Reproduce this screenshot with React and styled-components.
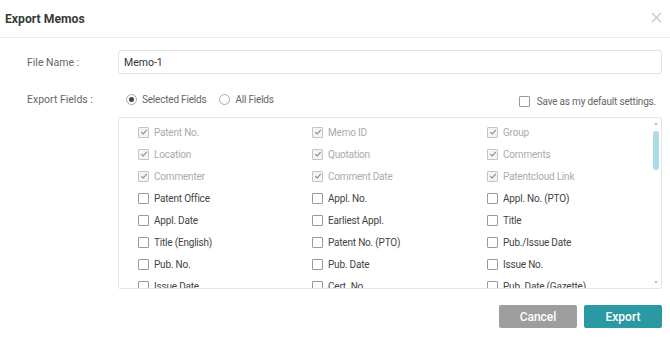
import React, { useState } from "react";
import styled, { createGlobalStyle } from "styled-components";

const GlobalStyle = createGlobalStyle`
  body {
    margin: 0;
    background: #fff;
    font-family: Roboto, "Liberation Sans", sans-serif;
    color: #555;
  }
`;

const fields = [
  ["Patent No.", true],
  ["Memo ID", true],
  ["Group", true],
  ["Location", true],
  ["Quotation", true],
  ["Comments", true],
  ["Commenter", true],
  ["Comment Date", true],
  ["Patentcloud Link", true],
  ["Patent Office", false],
  ["Appl. No.", false],
  ["Appl. No. (PTO)", false],
  ["Appl. Date", false],
  ["Earliest Appl.", false],
  ["Title", false],
  ["Title (English)", false],
  ["Patent No. (PTO)", false],
  ["Pub./Issue Date", false],
  ["Pub. No.", false],
  ["Pub. Date", false],
  ["Issue No.", false],
  ["Issue Date", false],
  ["Cert. No.", false],
  ["Pub. Date (Gazette)", false],
];

function Check({ checked }) {
  return (
    <Box checked={checked}>
      {checked && (
        <svg width="8" height="8" viewBox="0 0 8 8">
          <path d="M1.3 4.2 L3.2 6 L6.8 1.8" fill="none" stroke="#888" strokeWidth="1.1" />
        </svg>
      )}
    </Box>
  );
}

function App() {
  const [name, setName] = useState("Memo-1");
  const [mode, setMode] = useState("selected");

  return (
    <Modal>
      <GlobalStyle />
      <Header>
        <Title>Export Memos</Title>
        <Close aria-label="close">
          <svg width="11" height="11" viewBox="0 0 11 11">
            <path d="M1 1 L10 10 M10 1 L1 10" stroke="#c8c8c8" strokeWidth="1.4" />
          </svg>
        </Close>
      </Header>

      <Body>
        <FormRow>
          <Label>File Name :</Label>
          <Input value={name} onChange={(e) => setName(e.target.value)} />
        </FormRow>

        <FormRow top>
          <Label>Export Fields :</Label>
          <OptionsBar>
            <RadioGroup>
              <RadioItem onClick={() => setMode("selected")}>
                <Radio on={mode === "selected"} />
                Selected Fields
              </RadioItem>
              <RadioItem onClick={() => setMode("all")}>
                <Radio on={mode === "all"} />
                All Fields
              </RadioItem>
            </RadioGroup>
            <SaveDefault>
              <Check checked={false} />
              Save as my default settings.
            </SaveDefault>
          </OptionsBar>
        </FormRow>

        <FieldRow>
          <ListBox>
            <FieldGrid>
              {fields.map(([label, fixed]) => (
                <Field key={label} disabled={fixed}>
                  <Check checked={fixed} />
                  {label}
                </Field>
              ))}
            </FieldGrid>
            <ScrollTrack>
              <Arrow up />
              <Thumb />
              <Arrow />
            </ScrollTrack>
          </ListBox>
        </FieldRow>

        <Footer>
          <Button kind="cancel">Cancel</Button>
          <Button kind="primary">Export</Button>
        </Footer>
      </Body>
    </Modal>
  );
}

export default App;

const Modal = styled.div`
  width: 670px;
  height: 341px;
  background: #fff;
  overflow: hidden;
`;

const Header = styled.div`
  height: 37px;
  display: flex;
  align-items: center;
  justify-content: space-between;
  padding: 0 8px 0 5px;
  border-bottom: 1px solid #ececec;
`;

const Title = styled.div`
  font-size: 12.2px;
  font-weight: 700;
  color: #3a3a3a;
`;

const Close = styled.div`
  display: flex;
  margin-top: -2px;
  cursor: pointer;
`;

const Body = styled.div`
  padding: 12px 8px 0 27px;
`;

const FormRow = styled.div`
  display: flex;
  align-items: center;
  margin-bottom: ${(p) => (p.top ? "10px" : "18px")};
`;

const Label = styled.div`
  width: 91px;
  flex-shrink: 0;
  font-size: 10.5px;
  color: #666;
`;

const Input = styled.input`
  flex: 1;
  height: 24px;
  box-sizing: border-box;
  border: 1px solid #e2e2e2;
  border-radius: 3px;
  padding: 0 5px;
  font-family: inherit;
  font-size: 10.5px;
  color: #333;
  outline: none;
`;

const OptionsBar = styled.div`
  flex: 1;
  display: flex;
  align-items: center;
  justify-content: space-between;
  padding-left: 8px;
  padding-right: 6px;
`;

const RadioGroup = styled.div`
  display: flex;
  gap: 13px;
`;

const RadioItem = styled.label`
  display: flex;
  align-items: center;
  gap: 5px;
  font-size: 10px;
  letter-spacing: -0.2px;
  color: #666;
  cursor: pointer;
`;

const Radio = styled.span`
  width: 9px;
  height: 9px;
  border-radius: 50%;
  border: 1px solid #aaa;
  box-sizing: content-box;
  position: relative;
  &::after {
    content: "";
    position: absolute;
    left: 2px;
    top: 2px;
    width: 5px;
    height: 5px;
    border-radius: 50%;
    background: ${(p) => (p.on ? "#444" : "transparent")};
  }
`;

const SaveDefault = styled.label`
  display: flex;
  align-items: center;
  gap: 7px;
  font-size: 10px;
  letter-spacing: -0.2px;
  color: #666;
  margin-top: 4px;
`;

const Box = styled.span`
  width: 9px;
  height: 9px;
  flex-shrink: 0;
  border: 1px solid ${(p) => (p.checked ? "#c4c4c4" : "#9a9a9a")};
  border-radius: 1px;
  display: flex;
  align-items: center;
  justify-content: center;
  background: ${(p) => (p.checked ? "#f4f4f4" : "#fff")};
`;

const FieldRow = styled.div`
  padding-left: 91px;
`;

const ListBox = styled.div`
  position: relative;
  height: 172px;
  box-sizing: border-box;
  border: 1px solid #e6e6e6;
  border-radius: 2px;
  overflow: hidden;
`;

const FieldGrid = styled.div`
  display: grid;
  grid-template-columns: 174px 175px 1fr;
  grid-auto-rows: 22px;
  padding: 3px 0 0 19px;
`;

const Field = styled.label`
  display: flex;
  align-items: center;
  gap: 5px;
  font-size: 10px;
  letter-spacing: -0.2px;
  color: ${(p) => (p.disabled ? "#aaa" : "#444")};
  white-space: nowrap;
`;

const ScrollTrack = styled.div`
  position: absolute;
  top: 4px;
  right: 2px;
  bottom: 4px;
  width: 7px;
  display: flex;
  flex-direction: column;
  align-items: center;
`;

const Arrow = styled.span`
  width: 0;
  height: 0;
  border-left: 2.5px solid transparent;
  border-right: 2.5px solid transparent;
  ${(p) =>
    p.up
      ? "border-bottom: 3px solid #c6c6c6; margin-bottom: 6px;"
      : "border-top: 3px solid #c6c6c6; margin-top: auto;"}
`;

const Thumb = styled.span`
  width: 6px;
  height: 39px;
  border-radius: 3px;
  background: #a9dbe8;
`;

const Footer = styled.div`
  display: flex;
  justify-content: flex-end;
  gap: 7px;
  margin-top: 16px;
`;

const Button = styled.button`
  width: 78px;
  height: 23px;
  border: none;
  border-radius: 2px;
  font-family: inherit;
  font-size: 12px;
  font-weight: 500;
  color: #fff;
  cursor: pointer;
  background: ${(p) => (p.kind === "primary" ? "#2b99a4" : "#9e9e9e")};
`;
